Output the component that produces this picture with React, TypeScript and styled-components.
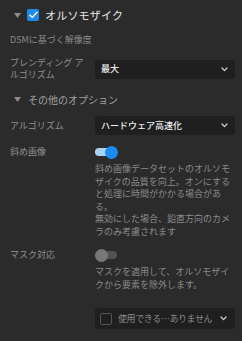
import { FC } from "react";
import styled, { createGlobalStyle } from "styled-components";

const GlobalStyle = createGlobalStyle`
  html, body {
    margin: 0;
    padding: 0;
    background: #2b2b2b;
  }
  body {
    font-family: "Noto Sans CJK JP", "Noto Sans", sans-serif;
    -webkit-font-smoothing: antialiased;
  }
`;

const Panel = styled.div`
  width: 242px;
  height: 341px;
  box-sizing: border-box;
  padding: 8px 7px 0 10px;
  background: #2b2b2b;
  overflow: hidden;
`;

const HeaderRow = styled.div`
  display: flex;
  align-items: center;
  height: 14px;
  padding-left: 4px;
`;

const Caret = styled.svg`
  width: 7px;
  height: 5px;
  flex: none;
`;

const Check = styled.span<{ $checked?: boolean }>`
  display: inline-flex;
  align-items: center;
  justify-content: center;
  box-sizing: border-box;
  width: 12px;
  height: 12px;
  border-radius: 2px;
  flex: none;
  background: ${(p) => (p.$checked ? "#1e8ae6" : "transparent")};
  border: ${(p) => (p.$checked ? "none" : "1.5px solid #555")};
`;

const HeaderTitle = styled.span`
  margin-left: 6px;
  font-size: 11px;
  line-height: 14px;
  color: #e8e8e8;
  letter-spacing: 0.2px;
`;

const Hint = styled.div`
  margin-top: 12px;
  font-size: 9px;
  line-height: 12px;
  color: #8a8a8a;
`;

const FieldRow = styled.div<{ $top: number }>`
  display: grid;
  grid-template-columns: 85px 1fr;
  align-items: center;
  margin-top: ${(p) => p.$top}px;
`;

const Label = styled.div`
  width: 78px;
  font-size: 9px;
  line-height: 12px;
  color: #8f8f8f;
`;

const Select = styled.div<{ $tall?: boolean }>`
  display: flex;
  align-items: center;
  gap: 6px;
  height: ${(p) => (p.$tall ? 21 : 19)}px;
  padding: ${(p) => (p.$tall ? "0 8px 0 5px" : "0 7px 0 6px")};
  border-radius: 3px;
  background: #1f1f1f;
  min-width: 0;
`;

const SelectText = styled.span<{ $muted?: boolean }>`
  flex: ${(p) => (p.$muted ? "none" : 1)};
  font-size: 9px;
  line-height: 12px;
  white-space: nowrap;
  letter-spacing: ${(p) => (p.$muted ? "-0.4px" : "0")};
  color: ${(p) => (p.$muted ? "#8a8a8a" : "#ececec")};
  font-weight: ${(p) => (p.$muted ? 400 : 500)};
`;

const ChevronSlot = styled.span`
  display: inline-flex;
  margin-left: auto;
`;

const SectionHeader = styled.div`
  display: flex;
  align-items: center;
  gap: 7px;
  margin-top: 11px;
  padding-left: 4px;
  height: 14px;
  font-size: 10px;
  color: #a0a0a0;
`;

const SwitchTrack = styled.span<{ $on?: boolean }>`
  position: relative;
  display: block;
  width: 22px;
  height: 8px;
  border-radius: 4px;
  background: ${(p) => (p.$on ? "#a9d1f5" : "#525252")};
`;

const SwitchKnob = styled.span<{ $on?: boolean }>`
  position: absolute;
  top: -2.5px;
  left: ${(p) => (p.$on ? 10 : 0)}px;
  width: 13px;
  height: 13px;
  border-radius: 50%;
  background: ${(p) => (p.$on ? "#1a8cf0" : "#777")};
`;

const Description = styled.div`
  margin: 5px 0 0 85px;
  font-size: 9px;
  line-height: 12.5px;
  color: #8a8a8a;
  line-break: strict;
`;

const Chevron: FC = () => (
  <ChevronSlot>
    <svg width="7" height="5" viewBox="0 0 7 5">
      <polyline
        points="1,1 3.5,3.6 6,1"
        fill="none"
        stroke="#d0d0d0"
        strokeWidth="1.3"
        strokeLinecap="round"
        strokeLinejoin="round"
      />
    </svg>
  </ChevronSlot>
);

const TriangleDown: FC = () => (
  <Caret viewBox="0 0 7 5">
    <polygon points="0,0 7,0 3.5,5" fill="#8c8c8c" />
  </Caret>
);

const Toggle: FC<{ on?: boolean }> = ({ on }) => (
  <div>
    <SwitchTrack $on={on}>
      <SwitchKnob $on={on} />
    </SwitchTrack>
  </div>
);

const App: FC = () => {
  return (
    <>
      <GlobalStyle />
      <Panel>
        <HeaderRow>
          <TriangleDown />
          <Check $checked style={{ marginLeft: 6 }}>
            <svg width="9" height="8" viewBox="0 0 9 8">
              <polyline
                points="1,4.2 3.4,6.4 8,1.3"
                fill="none"
                stroke="#fff"
                strokeWidth="1.4"
                strokeLinecap="round"
                strokeLinejoin="round"
              />
            </svg>
          </Check>
          <HeaderTitle>オルソモザイク</HeaderTitle>
        </HeaderRow>

        <Hint>DSMに基づく解像度</Hint>

        <FieldRow $top={11}>
          <Label>ブレンディング アルゴリズム</Label>
          <Select>
            <SelectText>最大</SelectText>
            <Chevron />
          </Select>
        </FieldRow>

        <SectionHeader>
          <TriangleDown />
          その他のオプション
        </SectionHeader>

        <FieldRow $top={10}>
          <Label>アルゴリズム</Label>
          <Select>
            <SelectText>ハードウェア高速化</SelectText>
            <Chevron />
          </Select>
        </FieldRow>

        <FieldRow $top={11}>
          <Label>斜め画像</Label>
          <Toggle on />
        </FieldRow>
        <Description>
          斜め画像データセットのオルソモザイクの品質を向上。オンにすると処理に時間がかかる場合がある。
          <br />
          無効にした場合、鉛直方向のカメラのみ考慮されます
        </Description>

        <FieldRow $top={11}>
          <Label>マスク対応</Label>
          <Toggle />
        </FieldRow>
        <Description>
          マスクを適用して、オルソモザイクから要素を除外します。
        </Description>

        <FieldRow $top={17}>
          <div />
          <Select $tall>
            <Check />
            <SelectText $muted>使用できる…ありません</SelectText>
            <Chevron />
          </Select>
        </FieldRow>
      </Panel>
    </>
  );
};

export default App;
